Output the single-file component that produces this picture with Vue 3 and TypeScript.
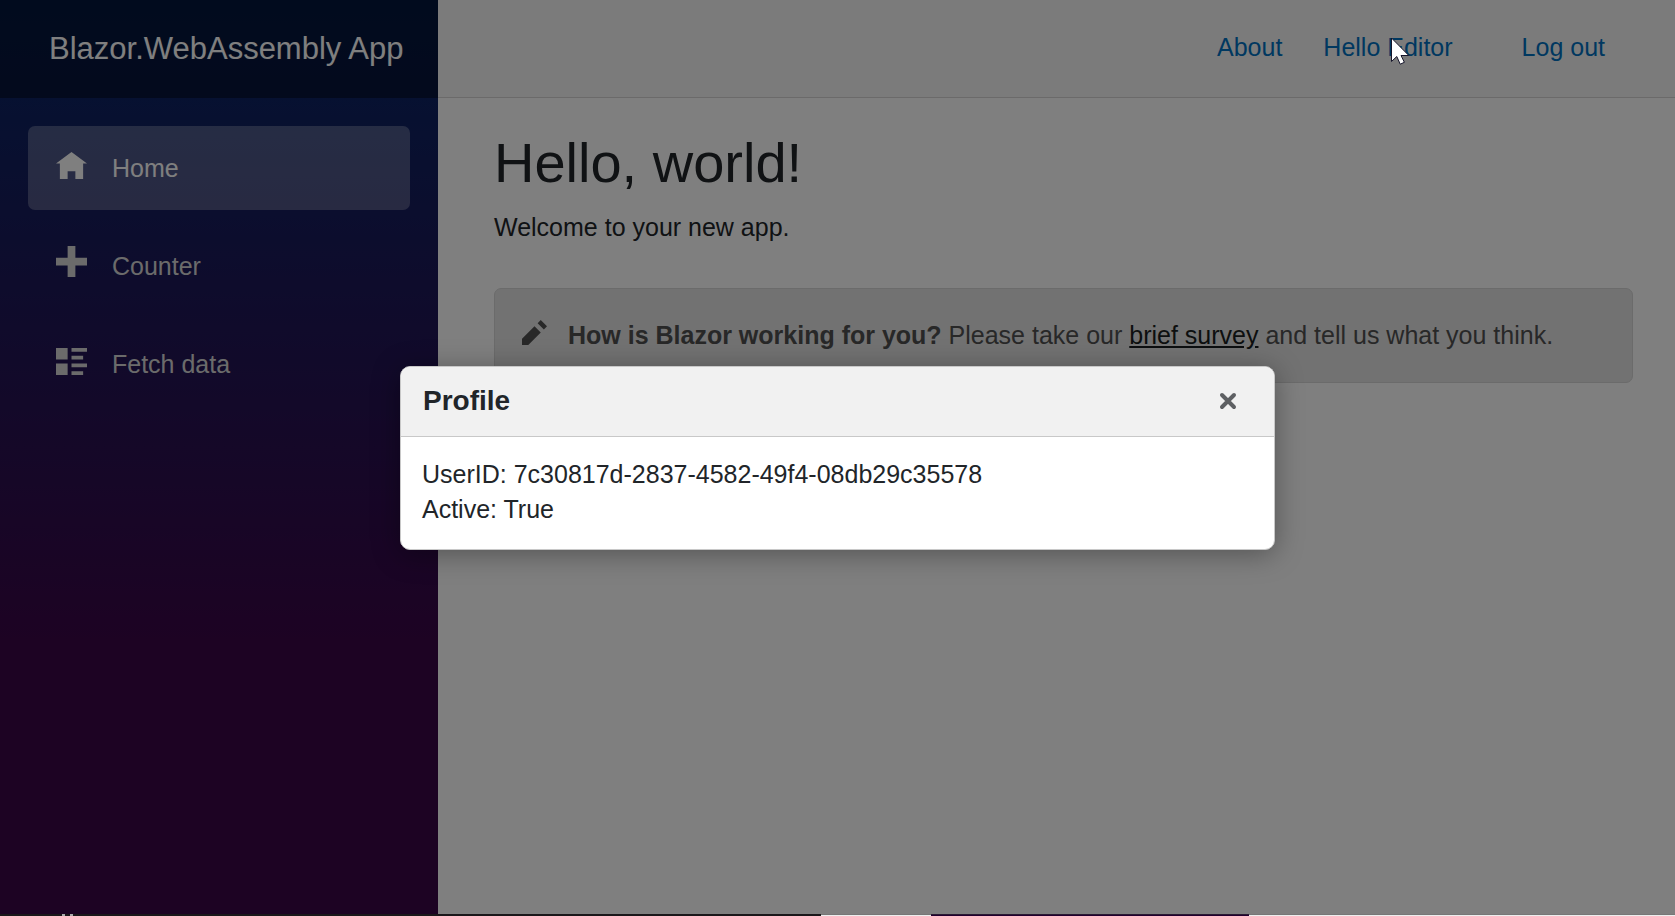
<script setup lang="ts">
import { ref } from 'vue'

interface NavItem {
  label: string
  icon: string
  active: boolean
}

const navItems: NavItem[] = [
  { label: 'Home', icon: 'M4 1l-4 3h1v4h2v-2h2v2h2v-4h1l-4-3z', active: true },
  { label: 'Counter', icon: 'M3 0v3h-3v2h3v3h2v-3h3v-2h-3v-3h-2z', active: false },
  {
    label: 'Fetch data',
    icon: 'M0 1v3h3v-3h-3zm4 0v1h4v-1h-4zm0 2v1h3v-1h-3zm-4 2v3h3v-3h-3zm4 0v1h4v-1h-4zm0 2v1h3v-1h-3z',
    active: false,
  },
]

const userId = '7c30817d-2837-4582-49f4-08db29c35578'
const isActive = 'True'
const modalOpen = ref<boolean>(true)
</script>

<template>
  <div class="screen">
    <div class="page">
      <aside class="sidebar">
        <div class="brand-row">
          <a class="brand" href="#">Blazor.WebAssembly App</a>
        </div>
        <nav class="nav">
          <a
            v-for="item in navItems"
            :key="item.label"
            href="#"
            class="nav-link"
            :class="{ active: item.active }"
          >
            <svg class="nav-icon" viewBox="0 0 8 8" aria-hidden="true"><path :d="item.icon" /></svg>
            <span>{{ item.label }}</span>
          </a>
        </nav>
      </aside>

      <main class="main">
        <header class="top-row">
          <a class="top-link" href="#">About</a>
          <a class="top-link user" href="#">Hello Editor</a>
          <button class="top-link" type="button">Log out</button>
        </header>
        <article class="content">
          <h1>Hello, world!</h1>
          <p class="welcome">Welcome to your new app.</p>
          <div class="alert">
            <svg class="pencil" viewBox="0 0 8 8" aria-hidden="true">
              <path d="M6 0l-1 1 2 2 1-1-2-2zm-2 2l-4 4v2h2l4-4-2-2z" />
            </svg>
            <p class="alert-text">
              <strong>How is Blazor working for you?</strong>
              Please take our <a href="#">brief survey</a> and tell us what you think.
            </p>
          </div>
        </article>
      </main>

      <div v-if="modalOpen" class="backdrop"></div>
    </div>

    <div class="edge">
      <span class="edge-dark"><i></i><i></i></span>
      <span class="edge-light"></span>
      <span class="edge-purple"></span>
      <span class="edge-light"></span>
    </div>

    <div v-if="modalOpen" class="modal-layer">
      <section class="modal" role="dialog" aria-labelledby="modal-title">
        <header class="modal-header">
          <h2 id="modal-title">Profile</h2>
          <button class="close" type="button" aria-label="Close" @click="modalOpen = false">
            <svg viewBox="0 0 20 20" aria-hidden="true"><path d="M4 4l12 12M16 4L4 16" /></svg>
          </button>
        </header>
        <div class="modal-body">
          <div>UserID: {{ userId }}</div>
          <div>Active: {{ isActive }}</div>
        </div>
      </section>
    </div>

    <svg class="cursor" viewBox="0 0 20 28" aria-hidden="true">
      <path d="M1.5 1v23.5l5.3-5 3.4 7.7 4.2-1.9-3.4-6.8h7.8z" />
    </svg>
  </div>
</template>

<style>
body {
  margin: 0;
}
</style>

<style scoped>
.screen {
  position: relative;
  display: flex;
  flex-direction: column;
  min-height: 100vh;
  overflow: hidden;
  font-family: "Liberation Sans", Arial, sans-serif;
  font-size: 25px;
  line-height: 37px;
  color: #212529;
}

.page {
  position: relative;
  display: flex;
  flex: 1;
  background: #fff;
}

.sidebar {
  flex: 0 0 438px;
  background: linear-gradient(180deg, rgb(5, 39, 103) 0%, #3a0647 70%);
}

.brand-row {
  display: flex;
  align-items: center;
  height: 98px;
  padding: 0 0 2px 49px;
  box-sizing: border-box;
  background: rgba(0, 0, 0, 0.4);
}

.brand {
  font-size: 31px;
  color: #fff;
  text-decoration: none;
  white-space: nowrap;
}

.nav {
  display: flex;
  flex-direction: column;
  gap: 14px;
  padding: 28px;
}

.nav-link {
  display: flex;
  align-items: center;
  gap: 25px;
  height: 84px;
  padding: 0 28px;
  box-sizing: border-box;
  border-radius: 7px;
  color: #d7d7d7;
  text-decoration: none;
}

.nav-link.active {
  background: rgba(255, 255, 255, 0.25);
  color: #fff;
}

.nav-icon {
  width: 31px;
  height: 31px;
  margin-bottom: 9px;
  fill: currentColor;
}

.main {
  flex: 1;
  min-width: 0;
}

.top-row {
  display: flex;
  align-items: center;
  justify-content: flex-end;
  gap: 41px;
  height: 98px;
  padding: 0 70px 2px 0;
  box-sizing: border-box;
  border-bottom: 1px solid #d6d5d5;
  background: #f7f7f7;
}

.top-link {
  padding: 0;
  border: 0;
  background: none;
  font: inherit;
  color: #0071c1;
  text-decoration: none;
  white-space: nowrap;
}

.user {
  margin-right: 28px;
}

.content {
  padding: 31px 42px 28px 56px;
}

h1 {
  margin: 0 0 13px;
  font-size: 56px;
  font-weight: 400;
  line-height: 67px;
}

.welcome {
  margin: 0 0 42px;
}

.alert {
  display: flex;
  align-items: center;
  gap: 21px;
  padding: 28px 27px;
  border: 1px solid #d6d6d6;
  border-radius: 7px;
  background: #e4e4e4;
  color: #505050;
}

.pencil {
  flex: none;
  width: 25px;
  height: 25px;
  margin-bottom: 7px;
  fill: currentColor;
}

.alert-text {
  margin: 0;
}

.alert-text a {
  color: #1a1e21;
}

.backdrop {
  position: absolute;
  inset: 0;
  background: rgba(0, 0, 0, 0.5);
}

.edge {
  display: flex;
  height: 2px;
}

.edge-dark {
  display: flex;
  gap: 5px;
  flex: 0 0 49%;
  padding-left: 62px;
  box-sizing: border-box;
  background: #1a171a;
}

.edge-dark i {
  width: 3px;
  background: #aaa;
}

.edge-light {
  flex: 0 0 110px;
  background: linear-gradient(#777 50%, #eee 50%);
}

.edge-light:last-child {
  flex: 1;
}

.edge-purple {
  flex: 0 0 19%;
  background: linear-gradient(#2a1a33 50%, #23002e 50%);
}

.modal-layer {
  position: absolute;
  inset: 0;
  display: flex;
  align-items: center;
  justify-content: center;
}

.modal {
  width: 875px;
  max-width: 100%;
  box-sizing: border-box;
  overflow: hidden;
  border: 1px solid #c8c8c8;
  border-radius: 10px;
  background: #fff;
  box-shadow: 0 4px 28px rgba(0, 0, 0, 0.35);
}

.modal-header {
  display: flex;
  align-items: center;
  justify-content: space-between;
  height: 70px;
  padding: 0 28px 2px 22px;
  box-sizing: border-box;
  border-bottom: 1px solid #c8c8c8;
  background: #f1f1f1;
}

h2 {
  margin: 0;
  font-size: 28px;
  font-weight: 700;
}

.close {
  display: flex;
  padding: 8px;
  border: 0;
  background: none;
}

.close svg {
  width: 20px;
  height: 20px;
  fill: none;
  stroke: #5e6063;
  stroke-width: 4;
  stroke-linecap: round;
}

.modal-body {
  padding: 20px 21px 22px;
  line-height: 35px;
}

.cursor {
  position: absolute;
  top: 37px;
  left: 1390px;
  width: 20px;
  height: 28px;
  fill: #fff;
  stroke: #15152a;
  stroke-width: 1;
}
</style>
